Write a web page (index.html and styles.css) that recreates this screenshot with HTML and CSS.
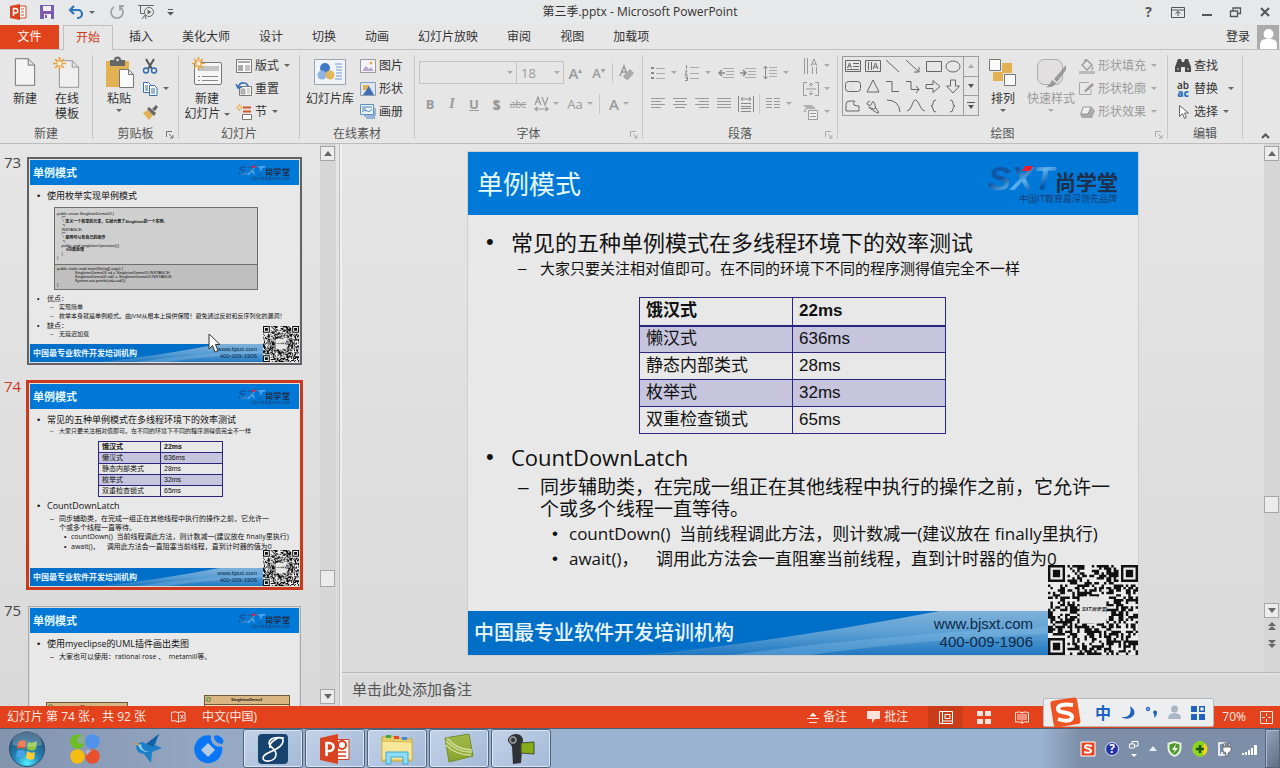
FILE: index.html
```html
<!DOCTYPE html>
<html lang="zh-CN">
<head>
<meta charset="utf-8">
<title>第三季.pptx - Microsoft PowerPoint</title>
<link rel="stylesheet" href="styles.css">
</head>
<body>
<svg class="defs" aria-hidden="true">
  <defs>
    <linearGradient id="g-sxt" x1="0" y1="0" x2="1" y2="1"><stop offset="0" stop-color="#0a5cb8"/><stop offset=".35" stop-color="#14549f"/><stop offset=".55" stop-color="#5fb4f0"/><stop offset=".75" stop-color="#0b57ae"/><stop offset="1" stop-color="#0b4da2"/></linearGradient>
    <linearGradient id="g-swoosh" x1="0" y1="0" x2="0" y2="1"><stop offset="0" stop-color="#7fb1d8"/><stop offset=".5" stop-color="#5b9fd4"/><stop offset="1" stop-color="#2179c2"/></linearGradient>
    <radialGradient id="g-orb" cx=".5" cy=".9" r=".9"><stop offset="0" stop-color="#4ff0ff"/><stop offset=".4" stop-color="#2386b8"/><stop offset="1" stop-color="#1f4468"/></radialGradient>
    <linearGradient id="g-green" x1="0" y1="0" x2="0" y2="1"><stop offset="0" stop-color="#a3b84a"/><stop offset="1" stop-color="#86a52c"/></linearGradient>
  </defs>
  <symbol id="logo" viewBox="0 0 132 40">
    <text x="0" y="26" font-family="Liberation Sans, sans-serif" font-size="34" font-weight="700" font-style="italic" fill="url(#g-sxt)">SXT</text>
    <path d="M37 2h8l-3 5h-8z" fill="#ee1c2e"/>
    <text x="67" y="26" font-family="Noto Sans CJK SC, sans-serif" font-size="21" font-weight="700" fill="#1d2f4a">尚学堂</text>
    <text x="31" y="38" font-family="Noto Sans CJK SC, sans-serif" font-size="9" fill="#173f75">中国IT教育最深领先品牌</text>
  </symbol>
  <symbol id="qr" viewBox="0 0 37 37">
    <rect width="37" height="37" fill="#ececec"/>
    <path id="qr-modules" fill="#111"/>
    <rect x="13" y="13" width="11" height="11" rx="2" fill="#e6e6e6"/>
    <text x="14" y="19" font-family="Liberation Sans, Noto Sans CJK SC, sans-serif" font-size="2" font-weight="700" font-style="italic" fill="#222">SXT尚学堂</text>
  </symbol>
  <symbol id="doc" viewBox="0 0 24 32"><path d="M1.500 1.500h14l7 7v22h-21zM15.500 1.500v7h7" fill="#f4f4f4" stroke="#6a6a6a"/></symbol>
  <symbol id="star" viewBox="0 0 12 12"><path d="M6 0v12M0 6h12M2 2l8 8M10 2l-8 8" stroke="#e8a33d" stroke-width="1.600"/><circle cx="6" cy="6" r="2" fill="#f8edd6"/></symbol>
</svg>

<div class="app">
  <header class="titlebar">
    <div class="quick">
      <svg width="17" height="16" viewBox="0 0 17 16"><path d="M8 2h8v12H8" fill="#fff" stroke="#d24726"/><path d="M11 5h3M11 8h3M11 11h3" stroke="#d24726"/><path d="M0 2l10-2v16L0 14z" fill="#d9431f"/><path d="M3.500 12V4.500h2a2 2 0 0 1 0 4.500h-2" fill="none" stroke="#fff" stroke-width="1.500"/></svg>
      <button class="plain q-save" aria-label="保存"><svg width="14" height="14" viewBox="0 0 14 14"><path d="M0 0h14v14H0z" fill="#7a5cb0"/><path d="M3 1h8v5H3z" fill="#f2eefa"/><path d="M4 9h7v5H4z" fill="#f2eefa"/><path d="M5 10h2v3H5z" fill="#7a5cb0"/></svg></button>
      <button class="plain q-undo" aria-label="撤消"><svg width="16" height="14" viewBox="0 0 16 14"><path d="M2 5h8a4 4 0 0 1 0 8H9M6 1L2 5l4 4" fill="none" stroke="#2e75b6" stroke-width="2.200"/></svg><i class="caret"></i></button>
      <button class="plain q-redo" aria-label="重复"><svg width="14" height="14" viewBox="0 0 14 14"><path d="M4 2a6 6 0 1 0 6 0M10 5.500V1h4" fill="none" stroke="#a3a3a3" stroke-width="1.800"/></svg></button>
      <button class="plain" aria-label="从头开始"><svg width="17" height="16" viewBox="0 0 17 16"><path d="M0 1.500h16M2.500 2v7.500h4M4 15l3-4 1 4" fill="none" stroke="#666"/><circle cx="11" cy="8" r="4.500" fill="#eee" stroke="#666"/><path d="M9.500 5.500l4 2.500-4 2.500z" fill="#666"/></svg></button>
      <button class="plain q-more" aria-label="自定义"><svg width="7" height="7" viewBox="0 0 7 7"><path d="M1 .5h5" stroke="#555"/><path d="M0 3h7L3.500 6.500z" fill="#555"/></svg></button>
    </div>
    <h1 class="doc-title">第三季.pptx - Microsoft PowerPoint</h1>
    <div class="window-buttons">
      <button class="plain help" aria-label="帮助">?</button>
      <button class="plain" aria-label="功能区显示选项"><svg width="14" height="11" viewBox="0 0 14 11"><path d="M.5.5h13v10H.5zM1 3h12M7 9V4.500M4.500 6.500L7 4.500l2.500 2" fill="none" stroke="#555"/></svg></button>
      <button class="plain" aria-label="最小化"><svg width="10" height="11" viewBox="0 0 10 11"><path d="M0 8h10" stroke="#555" stroke-width="2"/></svg></button>
      <button class="plain" aria-label="还原"><svg width="11" height="10" viewBox="0 0 11 10"><path d="M.5 4h7v5.500h-7zM3 4V1h7.500v5.500H8" fill="none" stroke="#555" stroke-width="1.300"/></svg></button>
      <button class="plain" aria-label="关闭"><svg width="10" height="10" viewBox="0 0 10 10"><path d="M1 1l8 8M9 1L1 9" stroke="#555" stroke-width="2"/></svg></button>
    </div>
  </header>

  <nav class="tabs">
    <button class="tab-file">文件</button>
    <button class="tab active">开始</button>
    <button class="tab">插入</button>
    <button class="tab">美化大师</button>
    <button class="tab">设计</button>
    <button class="tab">切换</button>
    <button class="tab">动画</button>
    <button class="tab">幻灯片放映</button>
    <button class="tab">审阅</button>
    <button class="tab">视图</button>
    <button class="tab">加载项</button>
    <button class="login">登录</button>
    <svg class="avatar" width="22" height="24" viewBox="0 0 22 24"><path d="M0 0h22v24H0z" fill="#ababab"/><circle cx="11.500" cy="9" r="5" fill="#fff"/><path d="M3 24v-4q0-6 6-6h5q6 0 6 6v4z" fill="#fff"/></svg>
  </nav>

  <section class="ribbon">
    <div class="group g-new">
      <div class="tools">
        <button class="big"><svg width="22" height="30"><use href="#doc"/></svg><span>新建</span></button>
        <button class="big"><svg width="28" height="32" viewBox="0 0 28 32"><use href="#doc" x="5" y="2" width="22" height="30" opacity=".7"/><use href="#star" x="0" y="0" width="13" height="13"/></svg><span>在线<br>模板</span></button>
      </div>
      <div class="label">新建</div>
    </div>
    <div class="group g-clip">
      <div class="tools">
        <button class="big"><svg width="29" height="32" viewBox="0 0 29 32"><path d="M1 4h23v26H1z" fill="#e3b052"/><path d="M5 3h4a3.500 3.500 0 0 1 7 0h4v6H5z" fill="#666"/><circle cx="12.500" cy="3" r="1.200" fill="#eee"/><path d="M14.500 12.500h9l5 5v13h-14zM23.500 12.500v5h5" fill="#fafafa" stroke="#777"/></svg><span>粘贴</span><i class="caret"></i></button>
        <div class="stack">
          <button class="small" aria-label="剪切"><svg width="16" height="16" viewBox="0 0 16 16"><path d="M4 1l6 10M12 1L6 11" stroke="#555" stroke-width="2"/><circle cx="4" cy="12.500" r="2.500" fill="none" stroke="#356fae" stroke-width="1.500"/><circle cx="12" cy="12.500" r="2.500" fill="none" stroke="#356fae" stroke-width="1.500"/></svg></button>
          <button class="small" aria-label="复制"><svg width="16" height="16" viewBox="0 0 16 16"><path d="M1.500 1.500h5l2 2v8h-7z" fill="#fff" stroke="#3a6ea5"/><path d="M7.500 4.500h5l2.500 2.500v7.500H7.500z" fill="#fff" stroke="#3a6ea5"/><path d="M3 5h3M3 7h3M3 9h3M9 8h4M9 10h4M9 12h4" stroke="#3a6ea5"/></svg><i class="caret"></i></button>
          <button class="small" aria-label="格式刷"><svg width="16" height="16" viewBox="0 0 16 16"><path d="M1 9l5-3 5 5-4 5z" fill="#e3b052"/><path d="M5 5l2-2 7 6-2 3z" fill="#666"/><path d="M10 5l4-4 2 2-3 4z" fill="#666"/></svg></button>
        </div>
      </div>
      <div class="label">剪贴板<svg class="launch" width="8" height="8"><path d="M.5 6V.5H6M3 3l4 4M7 4v3H4" fill="none" stroke="#777"/></svg></div>
    </div>
    <div class="group g-slides">
      <div class="tools">
        <button class="big"><svg width="31" height="32" viewBox="0 0 31 32"><rect x="2.500" y="5.500" width="27" height="22" rx="1.500" fill="#f6f6f6" stroke="#777"/><path d="M6 9h21v5H6z" fill="#c4c4c4"/><path d="M6 19.500h2M6 23.500h2M10 19.500h16M10 23.500h16" stroke="#888"/><use href="#star" x="0" y="0" width="13" height="13"/></svg><span>新建<br>幻灯片 <i class="caret"></i></span></button>
        <div class="stack">
          <button class="small"><svg width="16" height="16" viewBox="0 0 16 16"><path d="M.5 1.500h15v13H.5z" fill="#fafafa" stroke="#777"/><path d="M2 3h12v2H2zM2 7h5v6H2z" fill="#a9a9a9"/><path d="M9 8h5M9 10h5M9 12h5" stroke="#888"/></svg>版式<i class="caret"></i></button>
          <button class="small"><svg width="16" height="16" viewBox="0 0 16 16"><path d="M3.500 5.500h12v9h-12z" fill="#fafafa" stroke="#777"/><path d="M5 8h4v5H5zM11 8h3M11 10h3M11 12h3" fill="#b5b5b5" stroke="#aaa"/><path d="M2 6q2-5 6-4 3 0 4 3M0 3l2 4 4-1" fill="none" stroke="#3c6fb3" stroke-width="1.600"/></svg>重置</button>
          <button class="small"><svg width="16" height="16" viewBox="0 0 16 16"><path d="M7 3.500h8M7 7.500h8" stroke="#d2572b" stroke-width="2"/><path d="M6.500 10.500h9v5h-9z" fill="#fff" stroke="#777"/><use href="#star" x="0" y="0" width="7" height="7"/></svg>节<i class="caret"></i></button>
        </div>
      </div>
      <div class="label">幻灯片</div>
    </div>
    <div class="group g-online">
      <div class="tools">
        <button class="big"><svg width="32" height="30" viewBox="0 0 32 30"><path d="M.5 2.500h31v25H.5z" fill="#f0f3f8" stroke="#9aa3b0"/><circle cx="11" cy="11" r="5" fill="#3f78c4"/><circle cx="8" cy="18" r="4.500" fill="#8fb4e4"/><circle cx="16" cy="18" r="4.500" fill="#e0b85c"/><path d="M21 7h7M22 10h6M22 13h6M22 16h6M22 19h6M21 22h7" stroke="#6c9ad2"/></svg><span>幻灯片库</span></button>
        <div class="stack">
          <button class="small"><svg width="16" height="14" viewBox="0 0 16 14"><path d="M.5.5h15v13H.5z" fill="#f4f4f8" stroke="#9a9a9a"/><path d="M2 12l4-5 3 3 2-2 3 4z" fill="#b8a8cf"/><circle cx="11" cy="4" r="1.500" fill="#e3b052"/></svg>图片</button>
          <button class="small"><svg width="16" height="14" viewBox="0 0 16 14"><path d="M.5.5h15v13H.5z" fill="#dbe6f2" stroke="#8a9db4"/><path d="M3 3h6v5H3z" fill="#e3b052"/><path d="M3 13l6-9 5 9z" fill="#3f6fae"/></svg>形状</button>
          <button class="small"><svg width="16" height="15" viewBox="0 0 16 15"><path d="M.5.5h13v10H.5z" fill="#eaf2fa" stroke="#5a8fc4"/><path d="M2 3h10M2 5h4M2 8q3-3 5-1t5-2M4 12h11V4M6 14h9" fill="none" stroke="#4d83bd"/></svg>画册</button>
        </div>
      </div>
      <div class="label">在线素材</div>
    </div>
    <div class="group g-font disabled">
      <div class="tools rows">
        <div class="row">
          <span class="combo"><select class="c-font" aria-label="字体"><option></option></select><i class="caret"></i><span class="bar"></span><select class="c-size" aria-label="字号"><option>18</option></select><i class="caret"></i></span>
          <button class="ic wide" aria-label="增大字号"><b class="fa">A</b><sup>▴</sup></button>
          <button class="ic wide" aria-label="减小字号"><b class="fa sm">A</b><sup>▾</sup></button>
          <span class="vbar"></span>
          <button class="ic wide" aria-label="清除格式"><svg width="17" height="16" viewBox="0 0 17 16"><path d="M2 11l4-10 3 8M3.500 7h4" fill="none" stroke="#999" stroke-width="1.500"/><path d="M5 11l7-7 4 4-6 7-3-1z" fill="#aaa"/></svg></button>
        </div>
        <div class="row">
          <button class="ic"><b>B</b></button>
          <button class="ic"><em>I</em></button>
          <button class="ic"><u>U</u></button>
          <button class="ic"><b class="shadow">S</b></button>
          <button class="ic"><s>abc</s></button>
          <button class="ic dd" aria-label="字符间距"><svg width="15" height="16" viewBox="0 0 15 16"><path d="M1 9l3-8 3 8M2 6h4M8 1l3 8 3-8M1 13h13M3.500 11L1 13l2.500 2M11.500 11l2.500 2-2.500 2" fill="none" stroke="#999" stroke-width="1.200"/></svg><i class="caret"></i></button>
          <button class="ic dd">Aa<i class="caret"></i></button>
          <span class="vbar"></span>
          <button class="ic dd"><b class="fa">A</b><i class="caret"></i></button>
        </div>
      </div>
      <div class="label">字体<svg class="launch" width="8" height="8"><path d="M.5 6V.5H6M3 3l4 4M7 4v3H4" fill="none" stroke="#aaa"/></svg></div>
    </div>
    <div class="group g-para disabled">
      <div class="tools">
        <div class="rows">
          <div class="row">
            <button class="ic dd" aria-label="项目符号"><svg width="14" height="14" viewBox="0 0 14 14"><path d="M0 1h3v2H0zM0 6h3v2H0zM0 11h3v2H0z" fill="#888"/><path d="M5 2.500h9M5 7.500h9M5 12.500h9" stroke="#aaa"/></svg><i class="caret"></i></button>
            <button class="ic dd" aria-label="编号"><svg width="14" height="16" viewBox="0 0 14 16"><path d="M1.500 0v4M0 6h2l-2 4h3M0 12h2.500v3.500H0M1 13.500h1.500" fill="none" stroke="#888"/><path d="M5 2.500h9M5 8.500h9M5 13.500h9" stroke="#aaa"/></svg><i class="caret"></i></button>
            <button class="ic" aria-label="减少缩进"><svg width="16" height="12" viewBox="0 0 16 12"><path d="M5 1.500h11M8 4.500h8M8 7.500h8M5 10.500h11" stroke="#aaa"/><path d="M7 6H1M4 3L1 6l3 3" fill="none" stroke="#888" stroke-width="1.500"/></svg></button>
            <button class="ic" aria-label="增加缩进"><svg width="16" height="12" viewBox="0 0 16 12"><path d="M5 1.500h11M8 4.500h8M8 7.500h8M5 10.500h11" stroke="#aaa"/><path d="M0 6h6M3 3l3 3-3 3" fill="none" stroke="#888" stroke-width="1.500"/></svg></button>
            <button class="ic dd" aria-label="行距"><svg width="14" height="15" viewBox="0 0 14 15"><path d="M6 2.500h8M6 5.500h8M6 8.500h8M6 11.500h8" stroke="#aaa"/><path d="M2.500 1v13M.5 3.500l2-2.500 2 2.500M.5 11.500l2 2.500 2-2.500" fill="none" stroke="#888"/></svg><i class="caret"></i></button>
          </div>
          <div class="row">
            <button class="ic" aria-label="左对齐"><svg width="14" height="12" viewBox="0 0 14 12"><path d="M0 .5h14M0 3.500h10M0 6.500h14M0 9.500h10" stroke="#999"/></svg></button>
            <button class="ic" aria-label="居中"><svg width="14" height="12" viewBox="0 0 14 12"><path d="M0 .5h14M2 3.500h10M0 6.500h14M2 9.500h10" stroke="#999"/></svg></button>
            <button class="ic" aria-label="右对齐"><svg width="14" height="12" viewBox="0 0 14 12"><path d="M0 .5h14M4 3.500h10M0 6.500h14M4 9.500h10" stroke="#999"/></svg></button>
            <button class="ic" aria-label="两端对齐"><svg width="14" height="12" viewBox="0 0 14 12"><path d="M0 .5h14M0 3.500h14M0 6.500h14M0 9.500h14" stroke="#999"/></svg></button>
            <button class="ic" aria-label="分散对齐"><svg width="16" height="16" viewBox="0 0 16 16"><path d="M.5 0v16M15.500 0v16M3 7.500h10M3 10.500h10M3 12.500h10M3 15.500h10M3 3h10M5 1L3 3l2 2M11 1l2 2-2 2" fill="none" stroke="#888"/></svg></button>
            <span class="vbar"></span>
            <button class="ic dd" aria-label="分栏"><svg width="14" height="12" viewBox="0 0 14 12"><path d="M0 .5h6M8 .5h6M0 3.500h6M8 3.500h6M0 6.500h6M8 6.500h6M0 9.500h6M8 9.500h6" stroke="#999"/></svg><i class="caret"></i></button>
          </div>
        </div>
        <div class="stack">
          <button class="small" aria-label="文字方向"><svg width="16" height="16" viewBox="0 0 16 16"><path d="M1.500 0v16M4.500 0v16M9.500 9v7M13.500 9v7M8 8l3-7 3 7M9 6h4" fill="none" stroke="#999"/></svg><i class="caret"></i></button>
          <button class="small" aria-label="对齐文本"><svg width="16" height="16" viewBox="0 0 16 16"><path d="M4 1.500H.5v13H4M12 1.500h3.500v13H12M3 8h10M8 2v4M8 10v4M6 4l2-2 2 2M6 12l2 2 2-2" fill="none" stroke="#999"/></svg><i class="caret"></i></button>
          <button class="small" aria-label="转换为 SmartArt"><svg width="16" height="16" viewBox="0 0 16 16"><path d="M0 1h9l4 4H3v3H0l3-4z" fill="#b0b0b0"/><path d="M5.500 6.500h9v9h-9zM7 9.500h6M7 12.500h6" fill="#eee" stroke="#999"/></svg><i class="caret"></i></button>
        </div>
      </div>
      <div class="label">段落<svg class="launch" width="8" height="8"><path d="M.5 6V.5H6M3 3l4 4M7 4v3H4" fill="none" stroke="#aaa"/></svg></div>
    </div>
    <div class="group g-draw">
      <div class="tools">
        <div class="gallery">
          <svg class="shapes" width="120" height="58" viewBox="0 0 120 58"><g fill="none" stroke="#666">
            <path d="M2.500 3.500h15v11h-15zM4.500 11l2-5 2 5M5 9h3M10 6.500h6M10 9.500h6M4 12.500h12"/>
            <path d="M22.500 3.500h15v11h-15zM25.500 5v8M28.500 5v8M30 12l2.500-6 2.500 6M31 10h3"/>
            <path d="M43 3l13 12M63 3l13 12M76 10v5h-5M83.500 4.500h15v10h-15z"/><ellipse cx="110" cy="9.500" rx="7" ry="5.500"/>
            <rect x="2.500" y="24.500" width="15" height="10" rx="3"/><path d="M30 23l6 12H24zM43 24.500h6v10h7M63 24.500h5v8h8M73 29l3 3.500-3 3.500M83 27.500h7v-4l7 6-7 6v-4h-7zM107.500 23v6h-4l6.500 7 6.500-7h-4v-6z"/>
            <path d="M3 54V47q0-3 4-3h5q-3 3-1 4t5 1v5zM27 44q-5 2-2 4t4-2 3 2-4 3 3 3 1-4M44 43q12 0 13 12M64 54q3 0 5-6t4-5 4 6 5 5M93 43q-3 0-3 3t-2 3q2 0 2 3t3 3M107 43q3 0 3 3t2 3q-2 0-2 3t-3 3"/>
          </g></svg>
          <div class="gallery-nav"><button aria-label="上一行"><svg width="6" height="4"><path d="M0 4h6L3 0z" fill="#aaa"/></svg></button><button aria-label="下一行"><svg width="6" height="4"><path d="M0 0h6L3 4z" fill="#555"/></svg></button><button aria-label="更多"><svg width="8" height="8"><path d="M0 .5h8" stroke="#555"/><path d="M1 3h6L4 7z" fill="#555"/></svg></button></div>
        </div>
        <button class="big"><svg width="28" height="30" viewBox="0 0 28 30"><path d="M13 6h10v10H13zM4 15h10v9H4z" fill="#e3b052"/><path d="M.5 2.500h11v11H.5zM15.500 17.500h11v11h-11z" fill="#fafafa" stroke="#777"/></svg><span>排列</span><i class="caret"></i></button>
        <button class="big disabled"><svg width="32" height="32" viewBox="0 0 32 32"><rect x="2.500" y="2.500" width="25" height="25" rx="7" fill="#e3dfe0" stroke="#aaa"/><path d="M31 8L19 22l3 3 9-12zM17 23l4 3q-2 5-10 4 4-2 6-7z" fill="#999"/></svg><span>快速样式</span><i class="caret"></i></button>
        <div class="stack disabled">
          <button class="small"><svg width="16" height="16" viewBox="0 0 16 16"><path d="M3 7l5-5 5 5-5 5zM6 5V1" fill="none" stroke="#999" stroke-width="1.300"/><path d="M13 7q3 3 1 5t-2-1zM0 13h16v3H0z" fill="#bbb"/></svg>形状填充<i class="caret"></i></button>
          <button class="small"><svg width="16" height="16" viewBox="0 0 16 16"><path d="M12 8v5.500H.5v-12H10" fill="none" stroke="#aaa"/><path d="M5 10l8-8 2 2-8 7z" fill="#999"/></svg>形状轮廓<i class="caret"></i></button>
          <button class="small"><svg width="16" height="16" viewBox="0 0 16 16"><path d="M1 11l3-8h9l3 4-3 7H3z" fill="#aaa"/><path d="M4 3h8l-3 7H2z" fill="#eee" stroke="#999"/></svg>形状效果<i class="caret"></i></button>
        </div>
      </div>
      <div class="label">绘图<svg class="launch" width="8" height="8"><path d="M.5 6V.5H6M3 3l4 4M7 4v3H4" fill="none" stroke="#aaa"/></svg></div>
    </div>
    <div class="group g-edit">
      <div class="tools">
        <div class="stack">
          <button class="small"><svg width="16" height="15" viewBox="0 0 16 15"><path d="M3 1h3l1 3h2l1-3h3l3 8v5h-6V9H6v5H0V9z" fill="#4a4a4a"/><path d="M2 11h2M12 11h2" stroke="#ddd"/></svg>查找</button>
          <button class="small"><span class="replace">ab<br><b>ac</b></span>替换<i class="caret far"></i></button>
          <button class="small"><svg width="16" height="16" viewBox="0 0 16 16"><path d="M4.500 1.500v11l3-3 2 5 2-1-2-4.500h4z" fill="#fff" stroke="#666"/></svg>选择<i class="caret"></i></button>
        </div>
      </div>
      <div class="label">编辑</div>
    </div>
    <button class="plain collapse" aria-label="折叠功能区"><svg width="9" height="6"><path d="M1 5l3.500-3.500L8 5" fill="none" stroke="#555" stroke-width="2"/></svg></button>
  </section>

  <main class="workspace">
    <aside class="thumbs">
      <ol class="thumb-list">
        <li class="thumb">
          <span class="num">73</span>
          <article class="slide mini outlined">
            <header class="slide-head"><h3>单例模式</h3><svg class="logo"><use href="#logo"/></svg></header>
            <div class="slide-body">
              <ul class="l1"><li>使用枚举实现单例模式</li></ul>
              <div class="code"><pre>public enum SingletonDemo03 {
    /**
     * <b>定义一个枚举的元素，它就代表了Singleton的一个实例。</b>
     */
    INSTANCE;
    /**
     * <b>单例可以有自己的操作</b>
     */
    public void singletonOperation(){
        <b>//功能处理</b>
    }
}</pre><pre class="second">public static void main(String[] args) {
                SingletonDemo03 sd = SingletonDemo03.INSTANCE;
                SingletonDemo03 sd2 = SingletonDemo03.INSTANCE;
                System.out.println(sd==sd2);
}</pre></div>
              <ul class="l1 tiny"><li>优点：<ul class="l2"><li>实现简单</li><li>枚举本身就是单例模式。由JVM从根本上提供保障！避免通过反射和反序列化的漏洞！</li></ul></li><li>缺点：<ul class="l2"><li>无延迟加载</li></ul></li></ul>
            </div>
            <footer class="slide-foot"><svg class="swoosh" viewBox="0 0 500 44" preserveAspectRatio="none"><path d="M0 44Q140 30 300 0H500V44z" fill="url(#g-swoosh)"/><path d="M90 44Q280 18 500 12V20Q310 24 170 44z" fill="#8cc0e6" opacity=".35"/></svg><strong>中国最专业软件开发培训机构</strong><address>www.bjsxt.com<br>400-009-1906</address></footer>
            <svg class="qr"><use href="#qr"/></svg>
          </article>
        </li>
        <li class="thumb current">
          <span class="num">74</span>
          <article class="slide mini">
            <header class="slide-head"><h3>单例模式</h3><svg class="logo"><use href="#logo"/></svg></header>
            <div class="slide-body">
              <ul class="l1"><li>常见的五种单例模式在多线程环境下的效率测试<ul class="l2"><li>大家只要关注相对值即可。在不同的环境下不同的程序测得值完全不一样</li></ul></li></ul>
              <table><tr><th>饿汉式</th><th>22ms</th></tr><tr><td>懒汉式</td><td>636ms</td></tr><tr><td>静态内部类式</td><td>28ms</td></tr><tr><td>枚举式</td><td>32ms</td></tr><tr><td>双重检查锁式</td><td>65ms</td></tr></table>
              <ul class="l1"><li>CountDownLatch<ul class="l2 large"><li>同步辅助类，在完成一组正在其他线程中执行的操作之前，它允许一<br>个或多个线程一直等待。<ul class="l3"><li>countDown()&nbsp; 当前线程调此方法，则计数减一(建议放在 finally里执行)</li><li>await()，&nbsp;&nbsp;&nbsp; 调用此方法会一直阻塞当前线程，直到计时器的值为0</li></ul></li></ul></li></ul>
            </div>
            <footer class="slide-foot"><svg class="swoosh" viewBox="0 0 500 44" preserveAspectRatio="none"><path d="M0 44Q140 30 300 0H500V44z" fill="url(#g-swoosh)"/><path d="M90 44Q280 18 500 12V20Q310 24 170 44z" fill="#8cc0e6" opacity=".35"/></svg><strong>中国最专业软件开发培训机构</strong><address>www.bjsxt.com<br>400-009-1906</address></footer>
            <svg class="qr"><use href="#qr"/></svg>
          </article>
        </li>
        <li class="thumb">
          <span class="num">75</span>
          <article class="slide mini">
            <header class="slide-head"><h3>单例模式</h3><svg class="logo"><use href="#logo"/></svg></header>
            <div class="slide-body">
              <ul class="l1"><li>使用myeclipse的UML插件画出类图<ul class="l2 large"><li>大家也可以使用：rational rose 、&nbsp; metamill等。</li></ul></li></ul>
              <div class="uml"><div class="uml-box low"><i></i>Client</div><div class="uml-box"><i></i>SingletonDemo1</div></div>
            </div>
          </article>
        </li>
      </ol>
      <div class="scroll"><button aria-label="向上"><svg width="8" height="5"><path d="M0 5h8L4 0z" fill="#666"/></svg></button><span class="grow-up"></span><span class="knob"></span><span class="grow-down"></span><button aria-label="向下"><svg width="8" height="5"><path d="M0 0h8L4 5z" fill="#666"/></svg></button></div>
      <svg class="pointer" width="13" height="20" viewBox="0 0 13 20"><path d="M1 1v15l3.500-3.500L7 19l3-1.300L7.500 11.500H12z" fill="#fff" stroke="#333"/></svg>
    </aside>

    <section class="editor">
      <div class="canvas">
        <div class="stage">
          <article class="slide full">
            <header class="slide-head"><h2>单例模式</h2><svg class="logo"><use href="#logo"/></svg></header>
            <div class="slide-body">
              <ul class="l1"><li>常见的五种单例模式在多线程环境下的效率测试<ul class="l2"><li>大家只要关注相对值即可。在不同的环境下不同的程序测得值完全不一样</li></ul></li></ul>
              <table><tr><th>饿汉式</th><th>22ms</th></tr><tr><td>懒汉式</td><td>636ms</td></tr><tr><td>静态内部类式</td><td>28ms</td></tr><tr><td>枚举式</td><td>32ms</td></tr><tr><td>双重检查锁式</td><td>65ms</td></tr></table>
              <ul class="l1"><li>CountDownLatch<ul class="l2 large"><li>同步辅助类，在完成一组正在其他线程中执行的操作之前，它允许一<br>个或多个线程一直等待。<ul class="l3"><li>countDown()&nbsp; 当前线程调此方法，则计数减一(建议放在 finally里执行)</li><li>await()，&nbsp;&nbsp;&nbsp; 调用此方法会一直阻塞当前线程，直到计时器的值为0</li></ul></li></ul></li></ul>
            </div>
            <footer class="slide-foot"><svg class="swoosh" viewBox="0 0 500 44" preserveAspectRatio="none"><path d="M0 44Q140 30 300 0H500V44z" fill="url(#g-swoosh)"/><path d="M90 44Q280 18 500 12V20Q310 24 170 44z" fill="#8cc0e6" opacity=".35"/></svg><strong>中国最专业软件开发培训机构</strong><address>www.bjsxt.com<br>400-009-1906</address></footer>
            <svg class="qr"><use href="#qr"/></svg>
          </article>
        </div>
        <div class="scroll main-scroll"><button aria-label="向上"><svg width="8" height="5"><path d="M0 5h8L4 0z" fill="#666"/></svg></button><span class="grow-up"></span><span class="knob"></span><span class="grow-down"></span><button aria-label="向下"><svg width="8" height="5"><path d="M0 0h8L4 5z" fill="#666"/></svg></button><button class="bare" aria-label="上一张"><svg width="8" height="9"><path d="M0 4h8L4 0zM0 8h8L4 4z" fill="#666"/></svg></button><button class="bare" aria-label="下一张"><svg width="8" height="9"><path d="M0 1h8L4 5zM0 5h8L4 9z" fill="#666"/></svg></button></div>
      </div>
      <div class="notes">单击此处添加备注</div>
    </section>
  </main>

  <footer class="status">
    <span>幻灯片 第 74 张，共 92 张</span>
    <svg class="s-book" width="15" height="12" viewBox="0 0 15 12"><path d="M7.500 1.500v10M7.500 1.500Q4 0 .5 1.500v8.500Q4 9 7.500 11M7.500 1.500Q11 0 14 1.500v8.500Q11 9 7.500 11M9.500 4l3 4M12.500 4l-3 4" fill="none" stroke="#fbe3dc"/></svg>
    <span>中文(中国)</span>
    <div class="status-right">
      <button class="plain"><svg width="12" height="11" viewBox="0 0 12 11"><path d="M3 4h6L6 1zM0 6.500h12M2 10.500h8" fill="#fbe3dc" stroke="#fbe3dc"/></svg>备注</button>
      <button class="plain"><svg width="13" height="12" viewBox="0 0 13 12"><path d="M0 0h13v8H8l-3 4V8H0z" fill="#fbe3dc"/></svg>批注</button>
      <button class="plain view on" aria-label="普通视图"><svg width="14" height="13" viewBox="0 0 14 13"><path d="M.5.5h13v12H.5zM3.500.5v12M6 3.500h5v4H6zM3.500 10h10" fill="none" stroke="#fff"/></svg></button>
      <button class="plain view" aria-label="幻灯片浏览"><svg width="14" height="13" viewBox="0 0 14 13"><path d="M0 0h6v5H0zM8 0h6v5H8zM0 8h6v5H0zM8 8h6v5H8z" fill="#fbe3dc"/></svg></button>
      <button class="plain view" aria-label="阅读视图"><svg width="14" height="13" viewBox="0 0 14 13"><path d="M7 1.500v11M.5 1.500Q4 .5 7 1.500q3-1 6.500 0v9.500Q10 10 7 12q-3-2-6.500-1zM2 4h4M2 6h4M2 8h4M8 4h4M8 6h4M8 8h4" fill="none" stroke="#fbe3dc"/></svg></button>
      <span class="zoom">70%</span>
      <button class="plain" aria-label="适应窗口"><svg width="13" height="13" viewBox="0 0 13 13"><path d="M.5.5h12v12H.5zM6.500 2v3M6.500 8v3M2 6.500h3M8 6.500h3" fill="none" stroke="#fbe3dc"/></svg></button>
    </div>
    <div class="ime">
      <svg class="ime-logo" width="32" height="30" viewBox="0 0 32 30"><rect x="3" y="1" width="27" height="27" rx="3" fill="#ee5524" transform="rotate(-9 16 15)"/><path d="M24 7Q9 5 9 11c0 5 14 2 14 8 0 5-9 4-14 2" fill="none" stroke="#fff" stroke-width="4"/></svg>
      <span class="ime-cn">中</span>
      <svg width="14" height="14" viewBox="0 0 14 14"><path d="M9 0q7 5 3 10-5 5-12 1 12 1 9-11z" fill="#1f62bf"/></svg>
      <svg width="13" height="13" viewBox="0 0 13 13"><circle cx="3" cy="3" r="1.500" fill="none" stroke="#1f62bf" stroke-width="1.300"/><path d="M8 6a2 2 0 1 1 4 1q0 3-3 5 1-2 0-3.500z" fill="#1f62bf"/></svg>
      <svg width="13" height="15" viewBox="0 0 13 15"><circle cx="6.500" cy="4" r="3.500" fill="#a9b6c6"/><path d="M0 14q0-6 6.500-6t6.500 6z" fill="#a9b6c6"/></svg>
      <svg width="14" height="14" viewBox="0 0 14 14"><path d="M0 0h6v6H0zM0 8h6v6H0zM8 8h6v6H8z" fill="#1f62bf"/><path d="M8.700.7h4.600v4.600H8.700z" fill="none" stroke="#1f62bf" stroke-width="1.400"/></svg>
    </div>
  </footer>

  <footer class="taskbar">
    <button class="launch-btn" aria-label="开始菜单"><svg width="38" height="38" viewBox="0 0 38 38"><circle cx="19" cy="19" r="17.500" fill="url(#g-orb)" stroke="#2c4a68"/><path d="M10 12q4-3 8-1l-1 8q-4-2-8 0z" fill="#ea5a2c"/><path d="M20 12q4 2 9-1l-1 8q-4 3-9 0z" fill="#8cc63f"/><path d="M9 21q4-2 8 0l-1 7q-4-2-8 0z" fill="#4aa3e8"/><path d="M19 21q4 3 8 1l-1 7q-4 2-8-1z" fill="#fccc35"/><path d="M4 15a15 15 0 0 1 30 0q-15 4-30 0z" fill="#fff" opacity=".22"/></svg></button>
    <button class="launch-btn" aria-label="浏览器"><svg width="30" height="30" viewBox="0 0 30 30"><circle cx="7.500" cy="7.500" r="7.300" fill="#6cbf1f"/><circle cx="11" cy="6" r="4" fill="#95a5be" opacity=".7"/><circle cx="22.500" cy="7.500" r="7.300" fill="#4f93ea"/><circle cx="7.500" cy="22.500" r="7.300" fill="#f4bd12"/><circle cx="22.500" cy="22.500" r="7.300" fill="#e9512e"/><path d="M16 16h6l-6 6z" fill="#a9b4c8"/></svg></button>
    <button class="launch-btn" aria-label="蜂鸟"><svg width="32" height="32" viewBox="0 0 32 32"><path d="M7 11q4-4 8 0l13-10-4 11 7 3-10 4-1 11-7-9q-8-1-8-8z" fill="#1d7fc8"/><path d="M15 11l13-10-6 13z" fill="#1261a6"/><path d="M7 12q3 8 12 7-9-1-9-8z" fill="#8fd4f4"/><path d="M0 9l8 2v2z" fill="#d6a03c"/></svg></button>
    <button class="launch-btn" aria-label="云盘"><svg width="32" height="32" viewBox="0 0 32 32"><path d="M18 2.500a14 14 0 1 0 11 11q-5 1-8-2-4-3-3-9z" fill="#0b76f5"/><path d="M21 3q0 7 8 8 3-3 0-6-4-4-8-2z" fill="#0b76f5"/><path d="M15 10l7 7-7 7-7-7z" fill="#b8cbe4"/></svg></button>
    <button class="task"><svg width="30" height="30" viewBox="0 0 30 30"><rect width="30" height="30" rx="4" fill="#17446f"/><path d="M26 4Q12 2 11 9c0 4 8 6 7 12-1 7-13 8-13 3 0-6 14-6 19-14 3-5-1-8-6-5-5 3-7 6-6 9" fill="none" stroke="#fff" stroke-width="1.600"/></svg></button>
    <button class="task"><svg width="30" height="30" viewBox="0 0 30 30"><path d="M14 5.500h15v20H14" fill="#fff" stroke="#d9431f"/><circle cx="22" cy="11" r="4" fill="none" stroke="#d9431f" stroke-width="2"/><path d="M18 18h8M18 22h8" stroke="#d9431f" stroke-width="1.500"/><path d="M0 4l18-4v30L0 26z" fill="#d9431f"/><path d="M6.500 22V9h3a4 4 0 0 1 0 8h-3" fill="none" stroke="#fff" stroke-width="2.600"/></svg></button>
    <button class="task"><svg width="34" height="32" viewBox="0 0 34 32"><path d="M2 4l11-1 2 2 17 1v22H2z" fill="#e8cf6c" stroke="#c9a83c"/><path d="M6 2h5v3H6z" fill="#39a84c"/><path d="M14 3h5v3h-5z" fill="#e04c2e"/><path d="M22 4h5v3h-5z" fill="#3c8ae0"/><path d="M2 8l30 1v18H2z" fill="#f7e79a" stroke="#d4b64e"/><path d="M6 31V19h22v12h-5v-7H11v7z" fill="#8fdcf6" stroke="#3ea7d0"/></svg></button>
    <button class="task"><svg width="32" height="32" viewBox="0 0 32 32"><path d="M2 5l24-4 4 22-24 6z" fill="url(#g-green)" stroke="#718f30"/><path d="M3 8q12 12 26 11M3 12q10 10 25 10M4 5q10 12 25 12" fill="none" stroke="#cfdc9c" stroke-width="1.500"/></svg></button>
    <button class="task"><svg width="30" height="32" viewBox="0 0 30 32"><path d="M6 2q8-3 11 4l-2 24-8 1-1-17q-4-7 0-12z" fill="#2e3236"/><circle cx="7" cy="7" r="4.500" fill="#8a8f94" stroke="#222"/><circle cx="7" cy="7" r="2" fill="#333"/><path d="M15 10l13-1v12l-13-1z" fill="#86ad18" stroke="#454a30"/></svg></button>
    <div class="tray">
      <svg width="14" height="14" viewBox="0 0 14 14"><path d="M0 0h14v14H0z" fill="#e8431c" stroke="#fff"/><path d="M11 4Q4 2 4 5c0 2 6 1 6 4 0 2-4 2-7 1" fill="none" stroke="#fff" stroke-width="2"/></svg>
      <span class="tray-help">?</span>
      <svg width="10" height="18" viewBox="0 0 10 18"><path d="M.5 4h5v4h-5zM3 4V1.500h6V6H5.500" fill="none" stroke="#fff"/><path d="M2 14h6l-3 3z" fill="#fff"/></svg>
      <svg width="8" height="5"><path d="M0 5h8L4 0z" fill="#e8eef6"/></svg>
      <svg width="15" height="16" viewBox="0 0 15 16"><path d="M7.500 0l7 2v6q-1 6-7 8-6-2-7-8V2z" fill="#e8f2e0"/><path d="M7.500 2l5 1.500V8q-1 4-5 6-4-2-5-6V3.500z" fill="#4f9a2c"/><path d="M9 3L5 9h3l-2 4 5-6H8z" fill="#fff"/></svg>
      <svg width="16" height="16" viewBox="0 0 16 16"><circle cx="8" cy="8" r="7.500" fill="#f3d31c"/><path d="M1 5A7.500 7.500 0 0 1 13 2Q8 8 12 15 3 18 1 9z" fill="#8cd41c"/><path d="M8 4v8M4 8h8" stroke="#1c5212" stroke-width="2.500"/></svg>
      <svg width="14" height="16" viewBox="0 0 14 16"><path d="M8 2H1v12h6M4 14v-3" fill="none" stroke="#fff" stroke-width="1.600"/><path d="M5 6h8v4l-3 2v3H8v-3l-3-2zM6 2h1.500v4H6zM10.500 2H12v4h-1.500z" fill="#fff" stroke="#333" stroke-width=".5"/></svg>
      <svg width="16" height="12" viewBox="0 0 16 12"><path d="M0 10h2v2H0zM3 9h2v3H3zM6 7h2v5H6zM9 5h2v7H9zM12 2h3v10h-3z" fill="#fff"/></svg>
    </div>
    <button class="show-desktop" aria-label="显示桌面"></button>
  </footer>
</div>
<script src="app.js"></script>
</body>
</html>
```

FILE: styles.css
```css
* { box-sizing: border-box; }
body {
  margin: 0;
  font: 12px/16px "Open Sans", "Noto Sans CJK SC", sans-serif;
  color: #333;
  background: #e6e6e6;
}
button, select { font: inherit; color: inherit; background: none; border: 0; padding: 0; margin: 0; }
h1, h2, h3, ul, ol, pre { margin: 0; padding: 0; font: inherit; }
ul, ol { list-style: none; }
svg { display: block; flex: none; overflow: visible; }
.defs { position: absolute; width: 0; height: 0; }
.app { display: flex; flex-direction: column; height: 100vh; overflow: hidden; }
.plain { display: flex; align-items: center; gap: 4px; }
.caret {
  display: inline-block; flex: none; width: 0; height: 0;
  border: 3px solid transparent; border-top-color: #666; border-bottom: 0;
  vertical-align: middle;
}

/* title bar */
.titlebar {
  display: grid; grid-template-columns: 1fr auto 1fr; align-items: center;
  height: 24px; padding: 0 10px; background: #e7e8e9;
}
.quick { display: flex; align-items: center; }
.q-save { margin-left: 13px; }
.q-undo { margin-left: 14px; gap: 5px; }
.q-redo { margin: 0 14px 0 15px; }
.q-more { margin-left: 12px; }
.window-buttons { display: flex; justify-content: flex-end; }
.window-buttons button { width: 29px; justify-content: center; }
.window-buttons button:last-child { margin-right: -9px; }
.help { font-weight: 700; font-size: 14px; color: #555; }

/* tabs */
.tabs { display: flex; height: 26px; background: #e7e7e8; border-bottom: 1px solid #bfbfbf; gap: 3px; }
.tab-file { width: 59px; background: #e1431c; color: #fff; margin: 1px 1px 0 0; }
.tab { padding: 0 13px; white-space: nowrap; }
.tab.active { padding: 0 12px; margin: 1px 0 -1px; border: 1px solid #bfbfbf; border-bottom: 0; background: #e6e6e6; color: #d03a1c; }
.login { margin-left: auto; }
.avatar { margin: 1px 1px 0 4px; }

/* ribbon */
.ribbon { display: flex; height: 94px; padding: 5px 0 4px; background: #e6e6e6; border-bottom: 1px solid #bdbdbd; }
.group { display: flex; flex-direction: column; border-right: 1px solid #c9c9c9; flex: none; }
.g-new { width: 93px; }
.g-clip { width: 86px; }
.g-slides { width: 121px; }
.g-online { width: 115px; }
.g-font { width: 228px; }
.g-para { width: 195px; }
.g-draw { width: 330px; }
.g-edit { width: 75px; }
.tools { display: flex; height: 69px; flex: none; padding-left: 4px; }
.label { position: relative; text-align: center; color: #555; height: 15px; line-height: 19px; }
.launch { position: absolute; right: 4px; bottom: 0; }
.big {
  display: flex; flex-direction: column; align-items: center; width: 42px; height: 66px;
  line-height: 15px; padding-top: 2px; white-space: nowrap;
}
.big > svg { margin-bottom: auto; }
.big span { min-height: 30px; }
.big .caret { margin-top: -12px; margin-bottom: 9px; }
.big span .caret { margin: 0; }
.g-clip .big { width: 44px; }
.g-slides .big { width: 48px; }
.g-online .big { width: 52px; }
.stack { display: flex; flex-direction: column; margin-left: 1px; }
.g-slides .stack { margin-left: 5px; }
.g-online .stack { margin-left: 4px; }
.small { display: flex; align-items: center; gap: 3px; height: 23px; margin-top: -1px; margin-bottom: 1px; white-space: nowrap; }
.small .caret { margin-left: 2px; }
.disabled { color: #9a9a9a; }
.disabled .caret { border-top-color: #aaa; }
.disabled .label { color: #555; }
.rows { display: flex; flex-direction: column; padding-top: 2px; }
.row { display: flex; align-items: center; height: 31px; }
.combo { display: flex; align-items: center; width: 145px; height: 23px; border: 1px solid #c4c4c4; }
.combo select { appearance: none; }
.c-font { flex: 1; }
.c-size { width: 30px; font-size: 13px; }
.combo .bar { width: 1px; height: 21px; background: #c4c4c4; margin: 0 4px 0 3px; }
.combo > .caret:last-child { margin: 0 3px; }
.ic { display: flex; align-items: center; justify-content: center; width: 22px; height: 24px; font-size: 13px; }
.ic em { font-family: "Liberation Serif", serif; font-weight: 700; font-size: 14px; }
.ic u { font-weight: 700; }
.ic s { font-size: 10px; }
.ic .fa { font-size: 15px; font-weight: 600; }
.ic .sm { font-size: 13px; }
.ic sup { font-size: 8px; line-height: 8px; margin-bottom: 6px; }
.ic.wide { width: 23px; }
.ic.dd { width: 34px; gap: 4px; }
.shadow { text-shadow: 1px 1px 1px #888; }
.vbar { width: 1px; height: 20px; background: #c9c9c9; margin: 0 2px; }
.g-para .rows .ic.dd { width: 34px; gap: 6px; }
.g-para .tools { padding-left: 4px; }
.g-para .stack { margin-left: 7px; }
.gallery { display: flex; width: 137px; height: 60px; border: 1px solid #9c9c9c; margin-top: 1px; }
.gallery-nav { display: flex; flex-direction: column; flex: 1; border-left: 1px solid #9c9c9c; }
.gallery-nav button { flex: 1; display: flex; align-items: center; justify-content: center; border-bottom: 1px solid #9c9c9c; }
.gallery-nav button:last-child { border-bottom: 0; }
.g-draw .big { width: 48px; }
.g-draw .stack { margin-left: 4px; }
.replace { width: 16px; font-size: 10px; line-height: 8px; text-align: center; font-weight: 600; }
.replace b { color: #2e75b6; }
.g-edit .tools { padding-left: 7px; }
.g-edit .stack { margin: 0; }
.small .far { margin-left: 7px; }
.collapse { margin: auto 10px 0 auto; }

/* workspace */
.workspace { display: flex; flex: 1; min-height: 0; background: linear-gradient(#e5e5e5, #d9d9d9); }
.thumbs { position: relative; display: flex; width: 342px; flex: none; padding-right: 4px; border-right: 2px solid #efefef; box-shadow: inset -1px 0 #c2c2c2; }
.thumb-list { flex: 1; overflow: hidden; padding-top: 10px; display: flex; flex-direction: column; gap: 16px; }
.thumb { display: grid; grid-template-columns: 30px 269px; flex: none; align-items: start; }
.num { font-size: 15px; line-height: 17px; padding-left: 4px; color: #444; }
.thumb .slide { margin-top: 6px; outline: 1px solid #aaa; outline-offset: 1px; }
.thumb .outlined { outline: 2px solid #626266; }
.current .num { color: #c9371c; }
.current .slide { outline: 3px solid #cb3a1c; }
.pointer { position: absolute; left: 208px; top: 189px; }

.scroll { display: flex; flex-direction: column; width: 16px; flex: none; background: #d6d6d6; padding: 2px 0 2px 0; }
.scroll button, .knob { width: 15px; height: 15px; flex: none; display: flex; align-items: center; justify-content: center; background: #ececec; border: 1px solid #a6a6a6; }
.knob { height: 17px; }
.scroll .bare { background: none; border: 0; height: 17px; }
.grow-up { flex: 410; }
.grow-down { flex: 102; }
.main-scroll { padding-bottom: 20px; }
.main-scroll .grow-up { flex: 337; }
.main-scroll .grow-down { flex: 90; }

.editor { display: flex; flex-direction: column; flex: 1; min-width: 0; }
.canvas { display: flex; flex: 1; min-height: 0; }
.stage { flex: 1; padding: 8px 16px 16px; min-width: 0; }
.notes { height: 34px; padding: 6px 10px; font-size: 15px; line-height: 20px; color: #555; border-top: 1px solid #b9b9b9; box-shadow: inset 0 2px #e2e2e2; }

/* slides */
.slide { position: relative; display: flex; flex-direction: column; background: #e8e8e8; color: #111; }
.slide-head { display: flex; justify-content: space-between; align-items: center; background: #0078d7; color: #e6faff; flex: none; }
.slide-body { flex: 1; min-height: 0; white-space: nowrap; }
.slide-foot { position: relative; display: flex; justify-content: space-between; align-items: center; background: #006fc8; color: #eaf6ff; flex: none; white-space: nowrap; }
.slide-foot strong { position: relative; }
.slide-foot address { position: relative; font-family: "Liberation Sans", sans-serif; font-style: normal; text-align: right; color: #0e2a48; }
.swoosh { position: absolute; right: 0; top: 0; width: 74%; height: 100%; }
.qr { position: absolute; right: 0; bottom: 0; }
.slide li { position: relative; }
.slide li::before { position: absolute; content: "•"; font-family: "Liberation Sans", sans-serif; }
.slide .l2 > li::before { content: "–"; }
.slide table { border-collapse: collapse; table-layout: fixed; font-family: "Liberation Sans", "Noto Sans CJK SC", sans-serif; }
.slide th, .slide td { border: 1px solid #2a2680; text-align: left; padding: 0 0 0 6px; }
.slide tr:nth-child(even) { background: #c7c5de; }

.full { width: 100%; max-width: 670px; height: 503px; margin: 0 auto; box-shadow: 0 0 0 1px #cfcfcf; }
.full .slide-head { height: 63px; padding: 0 18px 0 9px; }
.full h2 { font-size: 26px; line-height: 36px; }
.full .logo { width: 132px; height: 40px; }
.full .slide-body { padding-top: 12px; }
.full .l1 { padding-left: 43px; font-size: 22px; line-height: 30px; }
.full .l1 > li::before { left: -25px; }
.full .l2 { padding-left: 29px; font-size: 15px; line-height: 22px; }
.full .l2 > li::before { left: -22px; }
.full .l2.large { font-size: 19px; padding-top: 4px; }
.full .l3 { padding-left: 29px; font-size: 17px; line-height: 25px; padding-top: 1px; }
.full .l3 > li::before { left: -17px; }
.full table { width: 307px; margin: 18px 0 8px 171px; font-size: 17px; line-height: 20px; }
.full th, .full td { height: 27px; }
.full tr:first-child th { height: 28px; border-bottom-width: 2px; }
.full .slide-foot { height: 44px; padding: 0 105px 0 6px; }
.full strong { font-size: 20px; font-weight: 500; }
.full address { font-size: 15px; line-height: 18px; }
.full .qr { width: 90px; height: 90px; }

.mini { height: 202px; }
.mini .slide-head { height: 25px; padding: 0 8px 0 3px; }
.mini h3 { font-size: 11px; font-weight: 700; }
.mini .logo { width: 53px; height: 16px; }
.mini .slide-body { padding-top: 5px; }
.mini .l1 { padding-left: 17px; font-size: 9px; line-height: 12px; }
.mini .l1 > li::before { left: -10px; }
.mini .l2 { padding-left: 12px; font-size: 6px; line-height: 10px; }
.mini .l2 > li::before { left: -9px; }
.mini .l2.large { font-size: 7px; line-height: 9px; padding-top: 2px; }
.mini .l3 { padding-left: 12px; font-size: 7px; line-height: 10px; }
.mini .l3 > li::before { left: -7px; }
.mini table { width: 125px; margin: 5px 0 3px 68px; font-size: 7px; line-height: 8px; }
.mini th, .mini td { height: 11px; padding-left: 3px; }
.mini .slide-foot { height: 18px; padding: 0 42px 0 3px; }
.mini strong { font-size: 8px; font-weight: 700; }
.mini address { font-size: 6px; line-height: 7px; }
.mini .qr { width: 36px; height: 36px; }
.mini .tiny { font-size: 7px; line-height: 9px; padding-top: 4px; }
.mini .tiny .l2 { line-height: 9px; }
.code { width: 204px; margin: 5px 0 0 24px; border: 1px solid #6f6f6f; background: #cfcfcf; }
.code pre { font: 4px/4px "Liberation Sans", "Noto Sans CJK SC", sans-serif; padding: 4px 2px; overflow: hidden; color: #111; }
.code .second { padding: 2px 2px; border-top: 1px solid #6f6f6f; background: #bfbfbf; }
.uml { display: flex; justify-content: space-between; align-items: flex-start; padding: 34px 9px 0 16px; }
.uml-box { display: flex; width: 86px; height: 30px; font: bold 4px/8px "Liberation Sans", sans-serif; border: 1px solid #6d5b3a; background: linear-gradient(#d9b583 8px, #6d5b3a 8px, #6d5b3a 9px, #f0dcb8 9px); padding-left: 1px; gap: 20px; }
.uml-box i { width: 5px; height: 5px; margin-top: 1px; border: 1px solid #3c8a3c; border-radius: 50%; }
.uml-box.low { width: 82px; margin-top: 7px; gap: 27px; }

/* status bar */
.status { position: relative; display: flex; align-items: center; height: 22px; flex: none; padding: 0 7px; background: #e3421d; color: #fdeae4; white-space: nowrap; }
.s-book { margin: 0 16px 0 25px; }
.status-right { display: flex; align-items: center; margin-left: auto; align-self: stretch; }
.status-right > button { margin-right: 20px; }
.status-right > .view { width: 35px; height: 22px; justify-content: center; margin: 0 3px 0 0; }
.status-right > .view.on { background: #cb3c19; }
.status-right .zoom { margin: 0 14px 0 180px; }
.status-right > button:last-child { margin: 0; }
.ime { position: absolute; right: 66px; bottom: 1px; display: flex; align-items: center; justify-content: space-between; width: 171px; height: 29px; padding: 0 8px 0 5px; background: #eceef0; border: 1px solid #b9b9b9; border-radius: 2px; }
.ime-logo { margin-right: 4px; }
.ime-cn { color: #1f62bf; font-size: 16px; font-weight: 700; }

/* taskbar */
.taskbar { display: flex; align-items: center; height: 40px; flex: none; border-top: 1px solid #4e5d70; background: linear-gradient(90deg, #8293ae, #95a8c4 220px, #9ab4d2 560px, #9ab4d2 calc(100% - 240px), #7d8fa8 calc(100% - 200px), #7d8fa8); }
.launch-btn { display: flex; justify-content: center; width: 62px; flex: none; }
.launch-btn:first-child { width: 54px; }
.launch-btn:nth-child(4) { margin-right: 3px; }
.task { display: flex; align-items: center; justify-content: center; width: 60px; height: 39px; margin-right: 2px; flex: none; border: 1px solid #52627a; border-radius: 3px; box-shadow: inset 0 0 0 1px #dbe6f4; background: linear-gradient(135deg, #c3d2e8, #a3b9d8); }
.tray { display: flex; align-items: center; gap: 10px; margin: 0 7px 0 auto; }
.tray-help { width: 14px; height: 14px; border: 1px solid #dfe6f5; border-radius: 50%; background: #2333a8; color: #fff; font-weight: 700; line-height: 12px; text-align: center; }
.show-desktop { width: 15px; height: 39px; border: 1px solid #56667c; box-shadow: inset 1px 1px #a9b8cc; background: linear-gradient(135deg, #93a3b8, #5f7188); }
```

FILE: app.js
```js
// Fills the QR symbol: three finder squares plus a seeded module pattern.
(function () {
  var n = 37, seed = 1906, d = "";
  function rnd() {
    seed = (seed * 1103515245 + 12345) % 2147483648;
    return seed / 2147483648;
  }
  function finder(x, y) {
    d += "M" + x + " " + y + "h7v7h-7zm1 1v5h5v-5z";
    d += "M" + (x + 2) + " " + (y + 2) + "h3v3h-3z";
  }
  for (var y = 0; y < n; y++) {
    for (var x = 0; x < n; x++) {
      var corner = (x < 8 && y < 8) || (x > n - 9 && y < 8) || (x < 8 && y > n - 9);
      if (rnd() > 0.5 && !corner) d += "M" + x + " " + y + "h1v1h-1z";
    }
  }
  finder(0, 0);
  finder(n - 7, 0);
  finder(0, n - 7);
  document.getElementById("qr-modules").setAttribute("d", d);
})();
```
